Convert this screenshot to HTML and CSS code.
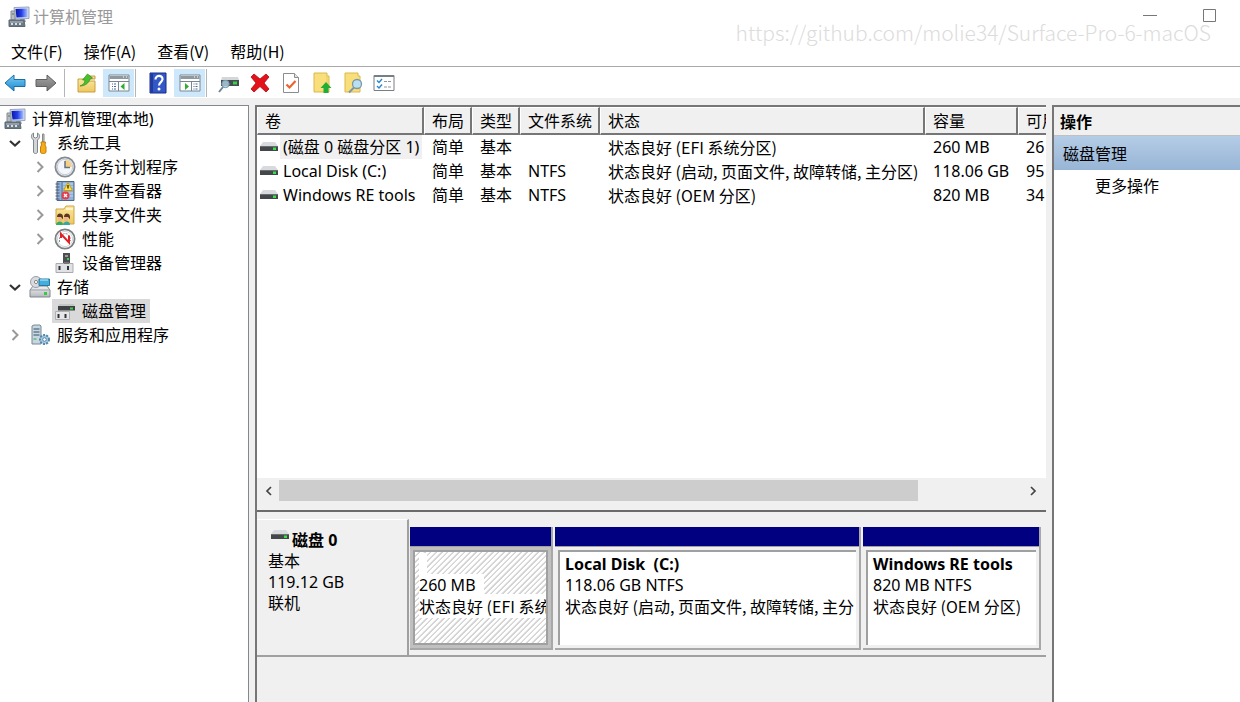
FILE: index.html
```html
<!DOCTYPE html>
<html lang="zh-CN">
<head>
<meta charset="utf-8">
<title>计算机管理</title>
<link rel="stylesheet" href="styles.css">
</head>
<body>
<svg class="defs" aria-hidden="true">
  <defs>
    <linearGradient id="g-blue" x1="0" y1="0" x2="0" y2="1"><stop offset="0" stop-color="#7fd0f5"/><stop offset="1" stop-color="#1687cf"/></linearGradient>
    <linearGradient id="g-gray" x1="0" y1="0" x2="0" y2="1"><stop offset="0" stop-color="#a5a5a5"/><stop offset="1" stop-color="#6f6f6f"/></linearGradient>
    <linearGradient id="g-screen" x1="0" y1="0" x2="1" y2="0"><stop offset="0" stop-color="#0a16a8"/><stop offset=".5" stop-color="#2540e8"/><stop offset="1" stop-color="#a9c0ff"/></linearGradient>
    <linearGradient id="g-folder" x1="0" y1="0" x2="0" y2="1"><stop offset="0" stop-color="#fbe6a0"/><stop offset="1" stop-color="#efc75e"/></linearGradient>
    <linearGradient id="g-metal" x1="0" y1="0" x2="0" y2="1"><stop offset="0" stop-color="#f2f3f5"/><stop offset="1" stop-color="#b4b8bd"/></linearGradient>
  </defs>
  <symbol id="i-computer" viewBox="0 0 22 22">
    <path d="M6 1.500l15-.5v11.500l-14 .5z" fill="#cfd8ee" stroke="#9aa6bd"/>
    <path d="M7.500 3l12-.5v8.500l-11 .5z" fill="url(#g-screen)"/>
    <path d="M12 13h5l1 3h-6z" fill="#9aa3ad"/>
    <path d="M3 5h4v9h-4z" fill="#b8bdc4" stroke="#858b93"/>
    <path d="M4 8h2" stroke="#4d7d4d"/>
    <path d="M1 14h15l1 6.500h-16z" fill="#6c7884" stroke="#5b6974"/>
    <path d="M2 16h13" stroke="#b8c2ca"/>
    <path d="M4 17v2M8 17v2M12 17v2" stroke="#d7dde2" stroke-width="2"/>
  </symbol>
  <symbol id="i-drive" viewBox="0 0 18 10">
    <path d="M3 0h12l3 4h-18z" fill="#d9dadd"/>
    <path d="M0 4h18v5h-18z" fill="#43474a"/>
    <path d="M0 4.500h18" stroke="#6a6e71"/>
    <path d="M13 5.500h3v2.500h-3z" fill="#35e04a"/>
  </symbol>
  <symbol id="i-down" viewBox="0 0 12 12"><path d="M1 4l5 4.500 5-4.500" fill="none" stroke="#333" stroke-width="2.200"/></symbol>
  <symbol id="i-right" viewBox="0 0 12 12"><path d="M3.500 1l5 5-5 5" fill="none" stroke="#999" stroke-width="2"/></symbol>
</svg>

<div class="window">
  <header class="titlebar">
    <svg class="icon"><use href="#i-computer"/></svg>
    <h1 class="title">计算机管理</h1>
    <div class="captions">
      <button class="caption" type="button" aria-label="最小化"><svg viewBox="0 0 14 14"><path d="M0 6.500h14" stroke="#777"/></svg></button>
      <button class="caption" type="button" aria-label="最大化"><svg viewBox="0 0 14 14"><path d="M.5.500h12v12h-12z" fill="none" stroke="#777"/></svg></button>
    </div>
    <span class="watermark">https://github.com/molie34/Surface-Pro-6-macOS</span>
  </header>

  <nav class="menubar">
    <button type="button">文件(F)</button>
    <button type="button">操作(A)</button>
    <button type="button">查看(V)</button>
    <button type="button">帮助(H)</button>
  </nav>

  <div class="toolbar" role="toolbar">
    <button class="tool nav" type="button" aria-label="后退"><svg viewBox="0 0 22 22"><path d="M1 11l9-8v4.500h11v7h-11v4.500z" fill="url(#g-blue)" stroke="#1c6ca6"/></svg></button>
    <button class="tool nav" type="button" aria-label="前进"><svg viewBox="0 0 22 22"><path d="M21 11l-9-8v4.500h-11v7h11v4.500z" fill="url(#g-gray)" stroke="#606060"/></svg></button>
    <span class="sep"></span>
    <button class="tool" type="button" aria-label="上一级"><svg viewBox="0 0 22 22"><path d="M2 20v-13h6l2 2h9v11z" fill="url(#g-folder)" stroke="#c99f3d"/><path d="M13 4h6v3h-6z" fill="#f5dd94" stroke="#c99f3d"/><path d="M4 14c3-1 5-3 5-6h-2.500l5-6 5 4-2.500 1c-1 4-5 7-10 7z" fill="#4cc02c" stroke="#2e8d1c" stroke-width=".7"/></svg></button>
    <button class="tool active" type="button" aria-label="显示/隐藏控制台树"><svg viewBox="0 0 22 22"><path d="M1 3h20v16h-20z" fill="#fff" stroke="#7b858e"/><path d="M1.500 4h19v3h-19z" fill="#8f99a2"/><path d="M15 5h1M18 5h1" stroke="#fff"/><path d="M1 9.500h20M10.500 9.500v9.500" stroke="#7b858e"/><path d="M4 12h4M4 14.500h4M4 17h4" stroke="#426b9a" stroke-dasharray="1 1 3"/><path d="M16.500 11v7l-4-3.500z" fill="#2fae30"/></svg></button>
    <span class="sep"></span>
    <button class="tool" type="button" aria-label="帮助"><svg viewBox="0 0 22 22"><path d="M3 1h16v20h-16z" fill="#3457c8" stroke="#1b2f86"/><path d="M3.500 1.500h2.500v19h-2.500z" fill="#213a9c"/><path d="M8.500 7.500c0-5 7.500-4.500 7 0-.3 2.500-3.500 3-3.500 6" fill="none" stroke="#fff" stroke-width="2.200"/><circle cx="12" cy="17" r="1.500" fill="#fff"/></svg></button>
    <button class="tool active" type="button" aria-label="显示/隐藏操作窗格"><svg viewBox="0 0 22 22"><path d="M1 3h20v16h-20z" fill="#fff" stroke="#7b858e"/><path d="M1.500 4h19v3h-19z" fill="#8f99a2"/><path d="M15 5h1M18 5h1" stroke="#fff"/><path d="M1 9.500h20M12.500 9.500v9.500" stroke="#7b858e"/><path d="M14.500 12h4M14.500 14.500h4M14.500 17h4" stroke="#426b9a" stroke-dasharray="1 1 3"/><path d="M6 11v7l4-3.500z" fill="#2fae30"/></svg></button>
    <span class="sep"></span>
    <button class="tool" type="button" aria-label="连接磁盘"><svg viewBox="0 0 22 22"><path d="M4 5h16l1 3h-18z" fill="#d4d7da"/><path d="M3 8h18v6h-18z" fill="#454b50"/><path d="M15 9.500h4v3h-4z" fill="#35d541"/><circle cx="7.500" cy="12" r="3.700" fill="#a8cce0" fill-opacity=".85" stroke="#7996a8"/><path d="M5 15l-4 5" stroke="#708595" stroke-width="2"/></svg></button>
    <button class="tool" type="button" aria-label="删除"><svg viewBox="0 0 22 22"><path d="M2 5l3-3 6 5 6-5 3 3-5 6 5 6-3 3-6-5.500-6 5.500-3-3 5-6z" fill="#e3121b" stroke="#a80e13" stroke-width=".8"/></svg></button>
    <button class="tool" type="button" aria-label="属性"><svg viewBox="0 0 22 22"><path d="M3.500 1.500h11l4 4v15h-15z" fill="#fff" stroke="#8c8c8c"/><path d="M14.500 1.500v4h4" fill="#e5e5e5" stroke="#8c8c8c"/><path d="M6.500 12.500l3 3 6-6.500" fill="none" stroke="#f0622a" stroke-width="2.200"/></svg></button>
    <button class="tool" type="button" aria-label="上移文件夹"><svg viewBox="0 0 22 22"><path d="M3 1h13v3h2v16h-15z" fill="#f9df7c" stroke="#dcb74a"/><path d="M16 4v16" stroke="#eccb61"/><path d="M12.500 21v-5h-3l5.500-6 5.500 6h-3v5z" fill="#22ad35"/></svg></button>
    <button class="tool" type="button" aria-label="查找"><svg viewBox="0 0 22 22"><path d="M3 1h13v3h2v16h-15z" fill="#f9df7c" stroke="#dcb74a"/><circle cx="15" cy="12" r="4.500" fill="#b9dff2" stroke="#7c97a8" stroke-width="1.300"/><path d="M12 15.500l-5 5" stroke="#7c97a8" stroke-width="2"/></svg></button>
    <button class="tool" type="button" aria-label="选项"><svg viewBox="0 0 22 22"><path d="M1 3.500h20v15h-20z" fill="#fff" stroke="#777f86"/><path d="M1 4h20" stroke="#777f86" stroke-width="2"/><path d="M4 8.500l2 2 3-3.500M4 14l2 2 3-3.500" fill="none" stroke="#2688d4" stroke-width="1.400"/><path d="M11 9.500h7M11 15h7" stroke="#8f979d" stroke-dasharray="3 1"/></svg></button>
  </div>

  <main class="panes">
    <aside class="tree">
      <ul>
        <li class="node root"><svg class="icon"><use href="#i-computer"/></svg><span>计算机管理(本地)</span></li>
        <li class="node l1"><button class="twist" type="button" aria-label="折叠"><svg><use href="#i-down"/></svg></button>
          <svg class="icon" viewBox="0 0 22 22"><path d="M4.500 1c-2 1-3 4-1 6l1 1v12c0 2 4 2 4 0v-12l1-1c2-2 1-5-1-6v4l-2 1-2-1z" fill="#d3d6d8" stroke="#7f8588"/><path d="M13.500 2h1.500v8h-1.500z" fill="#ccc" stroke="#888"/><path d="M12 10h4.500l-.5 3 1 2v5c0 2-5.500 2-5.500 0v-5l1-2z" fill="#f5ac18" stroke="#c47f09"/></svg><span>系统工具</span></li>
        <li class="node l2"><button class="twist" type="button" aria-label="展开"><svg><use href="#i-right"/></svg></button>
          <svg class="icon" viewBox="0 0 22 22"><circle cx="11" cy="11" r="9.600" fill="#f3f7fb" stroke="#858b91" stroke-width="1.800"/><circle cx="11" cy="11" r="7.700" fill="none" stroke="#c3cbd2"/><path d="M11 11v-7a7 7 0 0 1 7 7z" fill="#f6cf81"/><path d="M11 5v6.500h5" fill="none" stroke="#5f7387" stroke-width="1.500"/></svg><span>任务计划程序</span></li>
        <li class="node l2"><button class="twist" type="button" aria-label="展开"><svg><use href="#i-right"/></svg></button>
          <svg class="icon" viewBox="0 0 22 22"><path d="M3 1.500h17v19h-17z" fill="#8fb1d8" stroke="#4c678d"/><path d="M8 2v18" stroke="#58759b"/><path d="M9 4h10M9 7h10M9 10h10M9 13h10M9 16h10" stroke="#c6daef"/><path d="M1.500 4h4M1.500 7h4M1.500 10h4M1.500 13h4M1.500 16h4M1.500 19h4" stroke="#4d5b6c"/><path d="M14 2.500l4.500 8h-9z" fill="#ffe24a" stroke="#c79d0f"/><path d="M14 5v3.500" stroke="#333" stroke-width="1.400"/><circle cx="11.500" cy="15.500" r="4" fill="#e2404c"/><path d="M10 14l3 3M13 14l-3 3" stroke="#fff" stroke-width="1.300"/></svg><span>事件查看器</span></li>
        <li class="node l2"><button class="twist" type="button" aria-label="展开"><svg><use href="#i-right"/></svg></button>
          <svg class="icon" viewBox="0 0 22 22"><path d="M2 20v-15h8l2-3h8v18z" fill="url(#g-folder)" stroke="#cda646"/><path d="M12 5h7" stroke="#fff5cf" stroke-width="2"/><path d="M2 21c0-4 7-5 7 0z" fill="#2fae62"/><path d="M9 21c0-4 7-5 7 0z" fill="#35a99d"/><path d="M4 12h4v5h-4zM10 12h4v5h-4z" fill="#efb68b"/><path d="M3 13c0-5 6-4 6-.5v3l-2-2.500zM10 13c0-5 6-4 6-.5v3l-2-2.500z" fill="#5c3a22"/></svg><span>共享文件夹</span></li>
        <li class="node l2"><button class="twist" type="button" aria-label="展开"><svg><use href="#i-right"/></svg></button>
          <svg class="icon" viewBox="0 0 22 22"><circle cx="11" cy="11" r="9.600" fill="#fff" stroke="#7b8083" stroke-width="1.800"/><circle cx="11" cy="11" r="7.600" fill="none" stroke="#d2d5d7"/><path d="M5.500 14v-4l2-3 3-1.500 3 .5 2.500 3 .5 4" fill="none" stroke="#8c9396" stroke-dasharray="2 1"/><path d="M7 10v-4l8 8.500v-7" fill="none" stroke="#e21f27" stroke-width="2"/></svg><span>性能</span></li>
        <li class="node l2"><span class="twist"></span>
          <svg class="icon" viewBox="0 0 22 22"><path d="M9 1h7v10h-7z" fill="#4c4f51"/><path d="M11 3h3v2h-3z" fill="#999"/><path d="M13 6h2v2h-2z" fill="#3bd34a"/><path d="M2 11.500h17v9h-17z" fill="#e0e1e5" stroke="#a8abb0"/><path d="M4.500 14h2v4h-2zM13 14h2v4h-2z" fill="#303438"/><path d="M10 10h5v2h-5z" fill="#777"/></svg><span>设备管理器</span></li>
        <li class="node l1"><button class="twist" type="button" aria-label="折叠"><svg><use href="#i-down"/></svg></button>
          <svg class="icon" viewBox="0 0 22 22"><path d="M1 14l3-4h14l3 4v7h-20z" fill="url(#g-metal)" stroke="#82878c"/><path d="M1 14h20" stroke="#9ba0a5"/><circle cx="7" cy="6" r="5.500" fill="#d9dcdf" stroke="#9a9fa4"/><circle cx="7" cy="6" r="1.600" fill="#fff" stroke="#888"/><path d="M10 3h10.500v6.500h-10.500z" fill="#42aee0" stroke="#2b789e"/><path d="M11 4h8" stroke="#c3ecff"/><path d="M15 16h3v3h-3z" fill="#36cc42"/></svg><span>存储</span></li>
        <li class="node l2 selected"><span class="twist"></span><span class="mark">
          <svg class="icon" viewBox="0 0 22 22"><path d="M5 4h15l1 3h-17z" fill="#c3c5c6"/><path d="M4 6h17v4.500h-17z" fill="#3e4245"/><path d="M16 7.500h3v2h-3z" fill="#39d246"/><path d="M1.500 11.500h14v8h-14z" fill="#e7e7e9" stroke="#aeb0b3"/><path d="M3.500 14h2v4h-2zM10.500 14h2v4h-2z" fill="#303438"/></svg><span>磁盘管理</span></span></li>
        <li class="node l1"><button class="twist" type="button" aria-label="展开"><svg><use href="#i-right"/></svg></button>
          <svg class="icon" viewBox="0 0 22 22"><path d="M3 2l2-1h6l1 1v18h-9z" fill="#c7d6df" stroke="#74899a"/><path d="M4.500 5h6M4.500 8h6M4.500 11h6" stroke="#657c90" stroke-width="1.300"/><path d="M4.500 15h3" stroke="#3ba44d"/><circle cx="15.500" cy="15.500" r="4.500" fill="#a7cbe2" stroke="#5587a8" stroke-width="2" stroke-dasharray="2 1.200"/><circle cx="15.500" cy="15.500" r="1.800" fill="#fff" stroke="#5587a8"/></svg><span>服务和应用程序</span></li>
      </ul>
    </aside>

    <section class="center">
      <div class="volumes">
        <div class="list">
          <table>
            <colgroup><col class="c-vol"><col class="c-short"><col class="c-short"><col class="c-fs"><col class="c-state"><col class="c-cap"><col class="c-free"></colgroup>
            <thead><tr><th>卷</th><th>布局</th><th>类型</th><th>文件系统</th><th>状态</th><th>容量</th><th>可用空间</th></tr></thead>
            <tbody>
              <tr><td class="name"><span class="vol"><svg class="drive"><use href="#i-drive"/></svg><span class="hot">(磁盘 0 磁盘分区 1)</span></span></td><td>简单</td><td>基本</td><td></td><td class="state">状态良好 (EFI 系统分区)</td><td>260 MB</td><td>26</td></tr>
              <tr><td class="name"><span class="vol"><svg class="drive"><use href="#i-drive"/></svg><span>Local Disk (C:)</span></span></td><td>简单</td><td>基本</td><td>NTFS</td><td class="state">状态良好 (启动, 页面文件, 故障转储, 主分区)</td><td>118.06 GB</td><td>95</td></tr>
              <tr><td class="name"><span class="vol"><svg class="drive"><use href="#i-drive"/></svg><span>Windows RE tools</span></span></td><td>简单</td><td>基本</td><td>NTFS</td><td class="state">状态良好 (OEM 分区)</td><td>820 MB</td><td>34</td></tr>
            </tbody>
          </table>
        </div>
        <div class="scroll">
          <button type="button" aria-label="向左滚动"><svg viewBox="0 0 12 12"><path d="M8 2l-4 4 4 4" fill="none" stroke="#444" stroke-width="1.700"/></svg></button>
          <div class="track"><div class="thumb"></div></div>
          <button type="button" aria-label="向右滚动"><svg viewBox="0 0 12 12"><path d="M4 2l4 4-4 4" fill="none" stroke="#444" stroke-width="1.700"/></svg></button>
        </div>
      </div>

      <div class="graph">
        <div class="disk">
          <div class="disk-info">
            <h2><svg class="drive"><use href="#i-drive"/></svg>磁盘 0</h2>
            <p>基本</p><p>119.12 GB</p><p>联机</p>
          </div>
          <div class="parts">
            <article class="part chosen">
              <div class="bar"></div>
              <div class="box"><div class="inner"><h3><span>&nbsp;&nbsp;</span></h3><p><span>260 MB&nbsp;&nbsp;</span></p><p class="state"><span>状态良好 (EFI 系统分区)</span></p></div></div>
            </article>
            <article class="part">
              <div class="bar"></div>
              <div class="box"><div class="inner"><h3>Local Disk&nbsp; (C:)</h3><p>118.06 GB NTFS</p><p class="state">状态良好 (启动, 页面文件, 故障转储, 主分</p></div></div>
            </article>
            <article class="part">
              <div class="bar"></div>
              <div class="box"><div class="inner"><h3>Windows RE tools</h3><p>820 MB NTFS</p><p class="state">状态良好 (OEM 分区)</p></div></div>
            </article>
          </div>
        </div>
      </div>
    </section>

    <aside class="actions">
      <h2>操作</h2>
      <h3>磁盘管理</h3>
      <button type="button">更多操作</button>
    </aside>
  </main>
</div>
</body>
</html>
```
FILE: styles.css
```css
* { box-sizing: border-box; }

body {
  margin: 0;
  font-family: "Noto Sans", "Noto Sans CJK SC", sans-serif;
  font-size: 16px;
  line-height: 24px;
  color: #000;
  background: #fff;
}

h1, h2, h3, p, ul { margin: 0; padding: 0; font-size: inherit; }
button { font: inherit; color: inherit; border: 0; padding: 0; background: none; }
svg { display: block; flex: none; }

.defs { position: absolute; width: 0; height: 0; }
.icon { width: 22px; height: 22px; }
.drive { width: 18px; height: 10px; }
.state { font-family: "Noto Sans CJK SC", sans-serif; }

.window {
  display: flex;
  flex-direction: column;
  height: 100vh;
  min-height: 600px;
  overflow: hidden;
}

/* Title bar */
.titlebar {
  position: relative;
  display: flex;
  align-items: center;
  gap: 3px;
  height: 34px;
  padding-left: 8px;
}
.title { font-weight: 400; color: #999; }
.captions { display: flex; align-self: flex-start; margin-left: auto; }
.caption { display: grid; place-items: center; width: 60px; height: 32px; }
.caption svg { width: 14px; height: 14px; }
.watermark {
  position: absolute;
  top: 16px;
  right: 29px;
  font-family: "Noto Sans CJK SC", sans-serif;
  font-weight: 300;
  font-size: 21px;
  line-height: 32px;
  color: #dcdcdc;
  pointer-events: none;
}

/* Menu bar */
.menubar { display: flex; gap: 21px; height: 32px; padding: 3px 11px 1px; font-family: "Noto Sans CJK SC", sans-serif; }

/* Toolbar */
.toolbar {
  display: flex;
  gap: 1px;
  height: 32px;
  padding: 2px 0 1px;
  border-top: 1px solid #a9a9a9;
}
.tool { display: grid; place-items: center; width: 30px; }
.tool svg { width: 22px; height: 22px; }
.tool.nav { width: 30px; }
.tool.nav + .sep { margin-left: 2px; }
.tool.active { width: 31px; background: #cce8fa; }
.sep { width: 1px; margin-right: 6px; background: #b5b5b5; }

/* Panes */
.panes {
  flex: 1;
  min-height: 0;
  display: grid;
  grid-template-columns: 249px minmax(0, 1fr) 188px;
  gap: 6px;
  padding-top: 7px;
  background: #f0f0f0;
}

.tree {
  padding-top: 1px;
  background: #fff;
  border-top: 1px solid #828790;
  border-right: 1px solid #828790;
}
.tree ul { list-style: none; }
.node { display: flex; align-items: center; gap: 6px; height: 24px; }
.root { padding-left: 4px; }
.l1 { padding-left: 7px; }
.l2 { padding-left: 32px; }
.twist { display: grid; place-items: center; width: 16px; height: 22px; }
.twist svg { width: 12px; height: 12px; }
.mark { display: flex; align-items: center; gap: 6px; margin-left: -2px; padding: 0 4px 0 2px; background: #d9d9d9; }

.center {
  display: flex;
  flex-direction: column;
  min-width: 0;
  border-top: 2px solid #767676;
  border-left: 2px solid #767676;
}

/* Volume list */
.volumes {
  flex: 1;
  min-height: 0;
  display: flex;
  flex-direction: column;
  padding-bottom: 8px;
  border-bottom: 2px solid #6b6b6b;
}
.list { flex: 1; overflow: hidden; background: #fff; }
table { width: 841px; table-layout: fixed; border-collapse: separate; border-spacing: 0; }
.c-vol { width: 167px; }
.c-short { width: 48px; }
.c-fs { width: 80px; }
.c-state { width: 325px; }
.c-cap { width: 93px; }
.c-free { width: 80px; }
th, td { padding: 0 0 0 7px; text-align: left; font-weight: 400; white-space: nowrap; overflow: hidden; }
th {
  height: 27px;
  padding-top: 1px;
  background: #f0f0f0;
  border-top: 1px solid #fff;
  border-left: 1px solid #fff;
  border-right: 2px solid #767676;
  border-bottom: 2px solid #767676;
}
td { height: 24px; padding-left: 8px; }
td.name { padding-left: 3px; }
.vol { display: flex; align-items: center; gap: 2px; }
.vol > span { padding: 0 3px; }
.hot { background: #f0f0f0; }

.scroll { display: flex; height: 24px; padding: 1px 3px 1px 1px; border-top: 1px solid #f0f0f0; }
.scroll button { display: grid; place-items: center; width: 21px; }
.scroll svg { width: 12px; height: 12px; }
.track { flex: 1; }
.thumb { width: 86%; height: 100%; background: #cdcdcd; }

/* Disk map */
.graph { flex: 0 0 190px; padding-top: 7px; }
.disk { display: flex; height: 138px; line-height: 21px; }
.disk-info {
  width: 152px;
  padding: 10px 11px;
  border-top: 1px solid #fff;
  border-right: 2px solid #a0a0a0;
  border-bottom: 2px solid #a0a0a0;
}
.disk-info h2 { display: flex; gap: 3px; padding-left: 3px; }
.parts {
  flex: 1;
  min-width: 0;
  display: grid;
  grid-template-columns: 143fr 306fr 178fr;
  gap: 2px;
  padding: 8px 5px 5px 1px;
  border-bottom: 2px solid #a0a0a0;
}
.part { display: flex; flex-direction: column; min-width: 0; border-right: 2px solid #a8a8a8; border-bottom: 2px solid #a8a8a8; }
.bar { height: 20px; background: #000080; border-bottom: 1px solid #a0a0a0; }
.box { flex: 1; padding: 3px; }
.inner {
  height: 100%;
  padding: 2px 0 0 5px;
  overflow: hidden;
  white-space: nowrap;
  background: #fff;
  border-top: 2px solid #a0a0a0;
  border-left: 2px solid #a0a0a0;
}
.chosen .box { background: #c0c0c0; }
.chosen .inner {
  padding-left: 4px;
  border: 2px solid #a0a0a0;
  background: repeating-linear-gradient(135deg, #fff 0 2px, #d4d4d4 3px 4px);
}
.chosen .inner span { background: #fff; }

/* Actions */
.actions { background: #fff; border-top: 2px solid #767676; border-left: 2px solid #767676; }
.actions h2 { height: 29px; padding: 3px 6px 1px; background: #f0f0f0; border-bottom: 1px solid #c0c0c0; }
.actions h3 { height: 34px; padding: 6px 9px; font-weight: 400; background: linear-gradient(#b4cce6, #98b5d6); }
.actions button { padding: 4px 41px; }
```
